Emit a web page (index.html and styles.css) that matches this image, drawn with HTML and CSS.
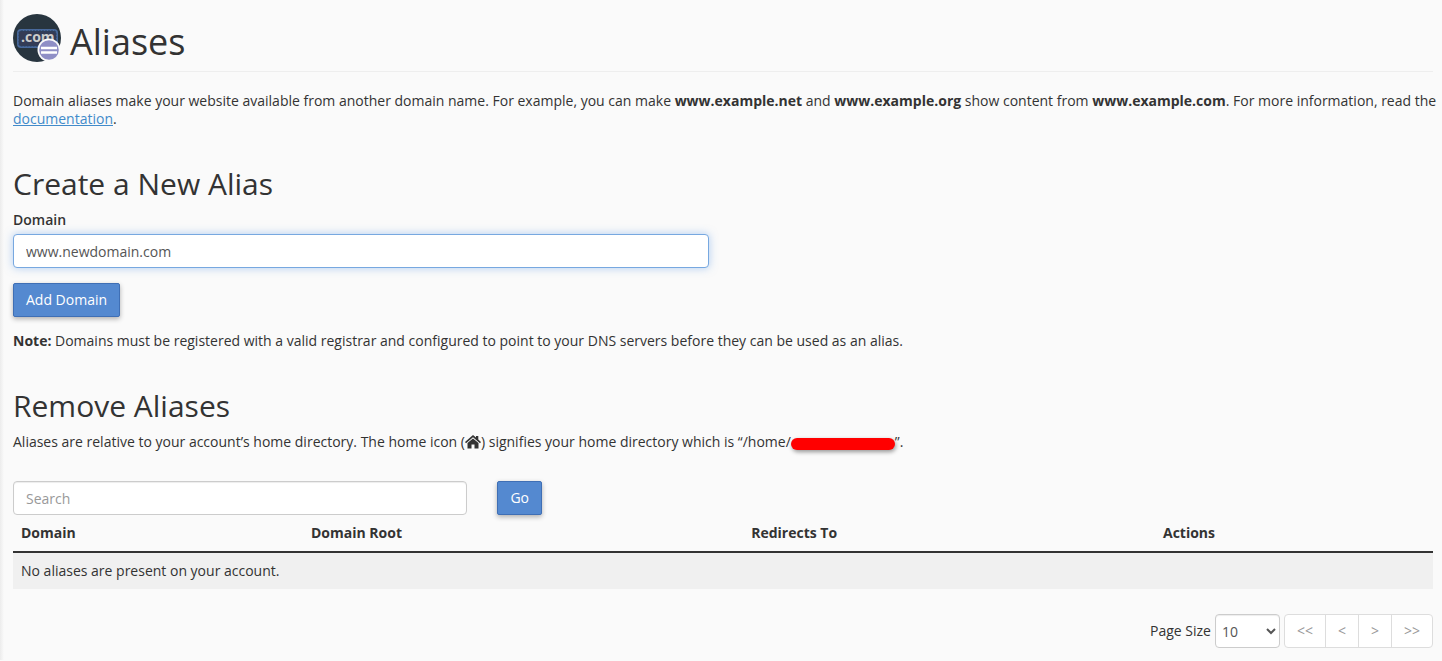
FILE: index.html
```html
<!DOCTYPE html>
<html lang="en">
<head>
<meta charset="utf-8">
<title>Aliases</title>
<link rel="stylesheet" href="styles.css">
</head>
<body>
<main class="content">
  <header class="page-header">
    <svg class="page-icon" viewBox="0 0 48 48" aria-hidden="true">
      <circle cx="24" cy="24" r="24" fill="#28353f"/>
      <rect x="4" y="15" width="41" height="19" rx="4" fill="#49699c"/>
      <rect x="6" y="17" width="37" height="15" rx="2" fill="#343c56" stroke="#28415f" stroke-width="1" stroke-dasharray="2 1"/>
      <text class="icon-text" x="8" y="28">.com</text>
      <circle cx="36" cy="36" r="11.500" fill="#fafafa"/>
      <circle cx="36" cy="36" r="9.800" fill="#8f8fc6"/>
      <path d="M28 34h16M28 38.500h16" stroke="#fff" stroke-width="2.500"/>
    </svg>
    <h1>Aliases</h1>
  </header>
  <p class="intro">Domain aliases make your website available from another domain name. For example, you can make <strong>www.example.net</strong> and <strong>www.example.org</strong> show content from <strong>www.example.com</strong>. For more information, read the <a href="#">documentation</a>.</p>

  <section class="section">
    <h2>Create a New Alias</h2>
    <form class="alias-form">
      <label class="field-label" for="domain">Domain</label>
      <input class="control control-active" id="domain" type="text" value="www.newdomain.com">
      <button class="btn" type="button">Add Domain</button>
    </form>
    <p class="note"><strong>Note:</strong> Domains must be registered with a valid registrar and configured to point to your DNS servers before they can be used as an alias.</p>
  </section>

  <section class="section">
    <h2>Remove Aliases</h2>
    <p>Aliases are relative to your account’s home directory. The home icon (<svg class="home" viewBox="0 0 16 14" role="img" aria-label="Home"><path d="M8 0 11 2.600V1h2.300v3.600L16 7l-1 1.200L8 2.200 1 8.200 0 7z"/><path d="M8 3.400 13.500 8v5.500H9.500V9.500h-3v4h-4V8z"/></svg>) signifies your home directory which is “/home/<span class="redacted"></span>”.</p>
    <form class="search">
      <input class="control" type="search" placeholder="Search" aria-label="Search">
      <button class="btn" type="button">Go</button>
    </form>
    <table class="aliases">
      <colgroup><col class="col-domain"><col class="col-root"><col class="col-redirect"><col></colgroup>
      <thead><tr><th>Domain</th><th>Domain Root</th><th>Redirects To</th><th>Actions</th></tr></thead>
      <tbody><tr><td colspan="4">No aliases are present on your account.</td></tr></tbody>
    </table>
    <div class="pager">
      <label for="page-size">Page Size</label>
      <select class="control page-size" id="page-size"><option>10</option><option>20</option><option>50</option></select>
      <nav class="pages" aria-label="Pages">
        <button type="button">&lt;&lt;</button><button type="button">&lt;</button><button type="button">&gt;</button><button type="button">&gt;&gt;</button>
      </nav>
    </div>
  </section>
</main>
</body>
</html>
```
FILE: styles.css
```css
* { box-sizing: border-box; }
body {
  margin: 0;
  background: #fafafa linear-gradient(to right, #ececec, #fafafa) no-repeat left / 4px 100%;
  color: #333;
  font: 14px/18px "Open Sans", sans-serif;
}
.content { padding: 14px 9px 12px 13px; }
h1, h2, p { margin: 0; }
h1, h2 { font-weight: 400; }
h1 { font-size: 36px; line-height: 40px; }
h2 { font-size: 30px; line-height: 33px; margin-bottom: 11px; }
.page-header {
  display: flex;
  align-items: center;
  gap: 9px;
  padding-bottom: 9px;
  border-bottom: 1px solid #eee;
  margin-bottom: 20px;
}
.page-header h1 { padding-top: 8px; }
.page-icon { width: 48px; height: 48px; }
.icon-text { font: 700 14px "Open Sans", sans-serif; fill: #ccc; }
.intro { margin-right: -8px; }
a { color: #428bca; text-decoration: underline; }
.section { padding-top: 39px; }
.alias-form { display: flex; flex-direction: column; align-items: flex-start; }
.field-label { font-weight: 600; margin-bottom: 5px; }
.control {
  height: 34px;
  padding: 6px 12px;
  border: 1px solid #ccc;
  border-radius: 4px;
  background: #fff;
  box-shadow: inset 0 1px 1px rgba(0, 0, 0, .075);
  color: #555;
  font: inherit;
  appearance: none;
}
.control::placeholder { color: #999; }
.control-active {
  width: 49%;
  margin-bottom: 15px;
  border-color: #77a8e0;
  box-shadow: 0 0 8px rgba(102, 160, 233, .5);
}
.btn {
  height: 34px;
  padding: 0 12px;
  border: 1px solid #3f6fb5;
  border-radius: 2px;
  background: #5489d0;
  box-shadow: 0 2px 5px rgba(0, 0, 0, .3);
  color: #fff;
  font: inherit;
  font-weight: 500;
}
.note { margin-top: 15px; }
.home { width: 16px; height: 14px; fill: #333; vertical-align: -2px; }
.redacted {
  display: inline-block;
  width: 104px;
  height: 12px;
  border-radius: 6px;
  background: #f00;
  box-shadow: 1px 2px 4px rgba(0, 0, 0, .4);
  vertical-align: -3px;
}
.search { display: flex; gap: 30px; margin-top: 30px; }
.search .control { width: 32%; }
.aliases { width: 100%; border-collapse: collapse; table-layout: fixed; }
.aliases th { padding: 9px 8px; border-bottom: 2px solid #333; text-align: left; }
.aliases td { padding: 9px 8px; background: #f0f0f0; }
.col-domain { width: 290px; }
.col-root { width: 31%; }
.col-redirect { width: 29%; }
.pager { display: flex; justify-content: flex-end; align-items: center; gap: 4px; margin-top: 25px; }
.page-size { width: 65px; padding: 0 2px; appearance: auto; }
.pages { display: flex; border: 1px solid #ddd; border-radius: 4px; background: #fff; }
.pages button {
  height: 32px;
  padding: 0 12px;
  border: 0;
  border-left: 1px solid #ddd;
  background: none;
  color: #999;
  font: inherit;
}
.pages button:first-child { border-left: 0; }
```
